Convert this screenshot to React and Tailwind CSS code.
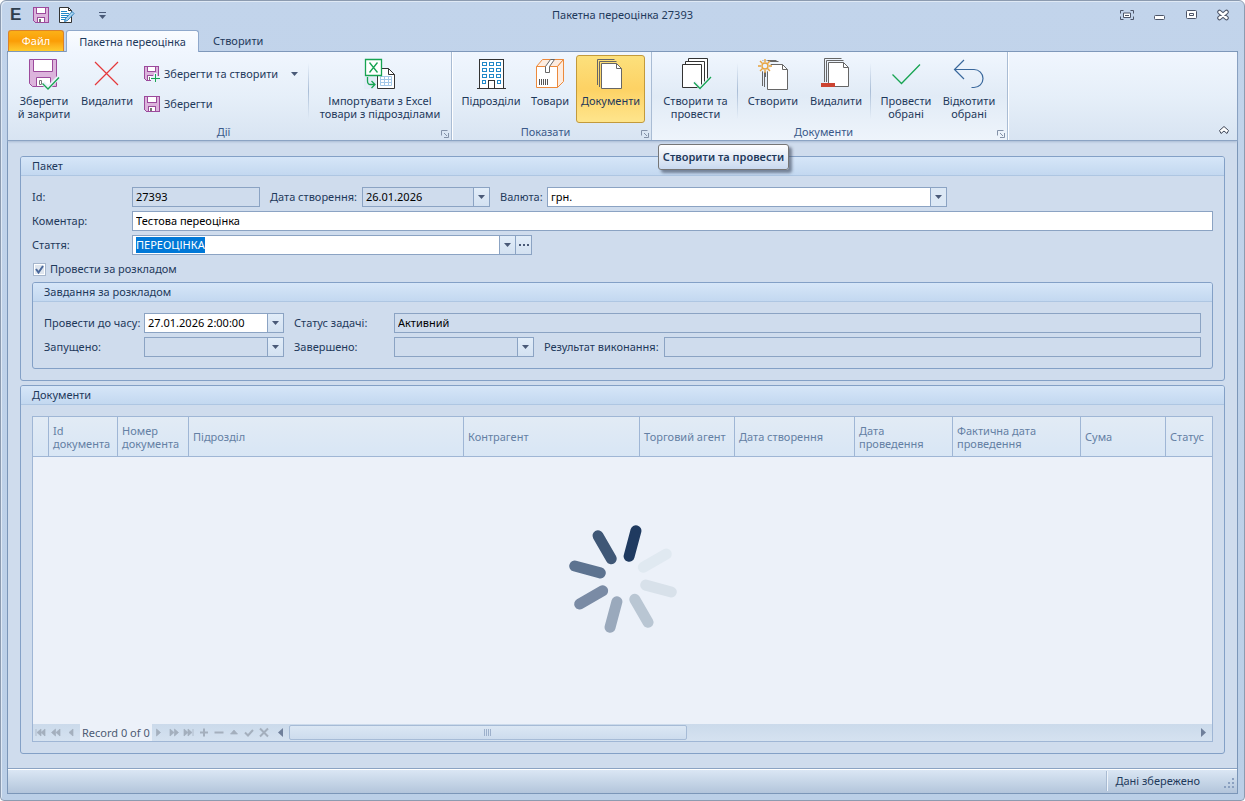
import React, { useEffect, useRef, useState } from 'react';

const SaveIcon = ({ size = 16 }) => (
    <svg width={size} height={size} viewBox="0 0 16 16" shapeRendering="crispEdges">
        <path d="M0.5 0.5h15v15h-13l-2-2z" fill="#dcb4dc" stroke="#9c4a9c" />
        <path d="M3.5 0.5h9v6h-9z" fill="#fff" stroke="#9c4a9c" />
        <path d="M4.5 10.5h7v5h-7z" fill="#fff" stroke="#9c4a9c" />
        <path d="M6 12h2v3h-2z" fill="#777" />
    </svg>
);

const SaveNewIcon = () => (
    <svg width="16" height="16" viewBox="0 0 16 16" overflow="visible" shapeRendering="crispEdges">
        <path d="M0.5 0.5h14v14h-12l-2-2z" fill="#dcb4dc" stroke="#9c4a9c" />
        <path d="M3.5 0.5h8v5h-8z" fill="#fff" stroke="#9c4a9c" />
        <path d="M3.5 9.5h5v5h-5z" fill="#fff" stroke="#9c4a9c" />
        <path d="M5 11h1v3h-1z" fill="#777" />
        <path d="M7 10h3v-3h3v3h4v6h-10z" fill="#eaf1fa" />
        <path d="M11.5 8v8M7 12.5h9" stroke="#17a452" />
    </svg>
);

const SaveCloseIcon = () => (
    <svg width="32" height="32" viewBox="0 0 32 32">
        <path d="M1.5 1.5h27v27h-24l-3-3z" fill="#dcb4dc" stroke="#9c4a9c" />
        <path d="M5.5 1.5h19v12h-19z" fill="#fff" stroke="#9c4a9c" />
        <path d="M8.5 19.5h14v9h-14z" fill="#fff" stroke="#9c4a9c" />
        <path d="M11.5 22.5h2v4h-2z" fill="#fff" stroke="#777" />
        <path d="M15 25l5 5 11-11" fill="none" stroke="#eaf1fa" strokeWidth="4" />
        <path d="M14.5 25.5l5.5 5.5 11-11.5" fill="none" stroke="#17a452" strokeWidth="1.3" />
    </svg>
);

const DeleteIcon = () => (
    <svg width="32" height="32" viewBox="0 0 32 32">
        <path d="M4 4l23 23M27 4L4 27" stroke="#e5383b" strokeWidth="1.2" />
    </svg>
);

const ExcelIcon = () => (
    <svg width="32" height="32" viewBox="0 0 32 32">
        <path d="M13.5 10.5h11l6 6v14h-17z" fill="#fff" stroke="#333" />
        <path d="M24.500 10.500v6h6" fill="none" stroke="#333" />
        <path d="M16.500 18.500h11v9h-11zM20.500 18v10M24.500 18v10M16 21.500h12M16 24.500h12" fill="none" stroke="#a3c8e8" />
        <path d="M1.500 1.500h16v16h-16z" fill="#fff" stroke="#17a452" strokeWidth="1.3" />
        <path d="M5.500 4.500l8 10M13.500 4.500l-8 10" stroke="#17a452" strokeWidth="1.3" />
        <path d="M0 19h12v12h-12z" fill="#e3ecf7" />
        <path d="M3.500 19v4q0 3.500 3 3.500h4M7.500 23l3.500 3.500-3.500 3.500" fill="none" stroke="#17a452" strokeWidth="1.3" />
    </svg>
);

const BuildingIcon = () => (
    <svg width="32" height="32" viewBox="0 0 32 32" shapeRendering="crispEdges">
        <path d="M4.5 30v-28.5h24v28.5" fill="#fff" stroke="#333" />
        <path d="M2 30.5h29M13.5 30v-7.500h6v7.500" fill="none" stroke="#333" />
        <path
            d="M7.500 4.500h4v3h-4zM14.500 4.500h4v3h-4zM21.500 4.500h4v3h-4zM7.500 10.500h4v3h-4zM14.500 10.500h4v3h-4zM21.500 10.500h4v3h-4zM7.500 16.500h4v3h-4zM14.500 16.500h4v3h-4zM21.500 16.500h4v3h-4zM7.500 22.500h3v3h-3zM22.500 22.500h3v3h-3z"
            fill="#fff"
            stroke="#2088c8"
        />
    </svg>
);

const BoxIcon = () => (
    <svg width="32" height="32" viewBox="0 0 32 32">
        <path d="M2.500 8.500l6-7h21l-6 7z" fill="#fdece0" stroke="#ec8a3c" />
        <path d="M23.500 8.500l6-7v22l-6 6z" fill="#fdece0" stroke="#ec8a3c" />
        <path d="M2.500 8.500h21v21h-21z" fill="#fff" stroke="#ec8a3c" />
        <path d="M11.500 8.500l5-7h4l-5 7v6h-4z" fill="#fff" stroke="#666" />
        <path d="M5.500 21v6M7.500 21v6M9.500 21v6M11.500 21v6M13.500 21v6" stroke="#555" />
    </svg>
);

const SheetStack = () => (
    <g fill="none" stroke="#666">
        <path d="M5.500 18v-15.500h14M8.500 19v-15.500h13" />
        <path d="M5.500 14v14M7.500 14v15" />
        <path d="M10.500 6.500h15l5 5v20h-20z" fill="#fff" />
        <path d="M25.500 6.500v5h5" />
    </g>
);

const DocumentsIcon = () => (
    <svg width="32" height="32" viewBox="0 0 32 32">
        <g fill="none" stroke="#666">
            <path d="M2.500 27v-25.500h17M4.500 29v-25.500h17" />
            <path d="M6.500 5.500h15l5 5v20h-20z" fill="#fff" />
            <path d="M21.500 5.500v5h5" />
        </g>
    </svg>
);

const CreatePostIcon = () => (
    <svg width="32" height="32" viewBox="0 0 32 32">
        <g fill="#fff" stroke="#333">
            <path d="M8.500 0.500h19v23h-19z" />
            <path d="M5.500 3.500h19v23h-19z" />
            <path d="M2.500 6.500h19v23h-19z" />
        </g>
        <path d="M14 24l6 6 12-12" fill="none" stroke="#eaf1fa" strokeWidth="3" />
        <path d="M14 24.500l6 6 11-11.500" fill="none" stroke="#17a452" strokeWidth="1.3" />
    </svg>
);

const NewDocsIcon = () => (
    <svg width="32" height="32" viewBox="0 0 32 32" overflow="visible">
        <SheetStack />
        <circle cx="8" cy="8" r="6" fill="#eaf1fa" />
        <g stroke="#e8a33d" strokeWidth="1.4" fill="none">
            <circle cx="8" cy="8" r="3" />
            <path d="M8 1v3M8 12v3M1 8h3M12 8h3M3 3l2.500 2.500M13 3l-2.500 2.500M3 13l2.500-2.500M13 13l-2.500-2.500" />
        </g>
    </svg>
);

const RemoveDocsIcon = () => (
    <svg width="32" height="32" viewBox="0 0 32 32">
        <g fill="none" stroke="#666">
            <path d="M4.500 24v-23.500h17M6.500 24v-21.500h17" />
            <path d="M8.500 4.500h15l5 5v19h-20z" fill="#fff" />
            <path d="M23.500 4.500v5h5" />
        </g>
        <path d="M1 25h14v4h-14z" fill="#cc4432" />
    </svg>
);

const CheckIcon = () => (
    <svg width="32" height="32" viewBox="0 0 32 32">
        <path d="M2.500 16.500l9 9 18.500-19" fill="none" stroke="#17a452" strokeWidth="1.3" />
    </svg>
);

const UndoIcon = () => (
    <svg width="32" height="32" viewBox="0 0 32 32">
        <path d="M11 2l-9.500 9.500 9.500 9.500M1.500 11.500h19.500a9 9 0 0 1 0 18h-2.500" fill="none" stroke="#3a689c" strokeWidth="1.2" />
    </svg>
);

const EditDocIcon = () => (
    <svg width="16" height="16" viewBox="0 0 16 16">
        <path d="M0.500 0.500h9l3 3v12h-12z" fill="#fff" stroke="#333" />
        <path d="M9.500 0.500v3h3" fill="none" stroke="#333" />
        <path d="M2 4.500h6M2 6.500h8M2 8.500h7M2 10.500h5M2 12.500h4" stroke="#2088c8" />
        <path d="M5.500 14.500l1-3 6.500-7 2 2-6.500 7z" fill="#a9d4f0" stroke="#2a7fbd" />
    </svg>
);

const Arrow = () => (
    <svg width="7" height="4" viewBox="0 0 7 4">
        <path d="M0 0h7l-3.500 4z" fill="#4a5a78" />
    </svg>
);

const windowButtons = [
    {
        name: 'Full screen',
        icon: (
            <>
                <path d="M0.500 4.500v-3h3M10.500 1.500h3v3M13.500 7.500v3h-3M3.500 10.500h-3v-3" fill="none" stroke="#4c5568" />
                <path d="M3.500 4h7v4.500h-7z" fill="#fff" stroke="#4c5568" />
                <path d="M5 6.500h4" stroke="#4c5568" />
            </>
        )
    },
    { name: 'Minimize', icon: <rect x="2.500" y="6.500" width="10" height="4" rx="1" fill="#fff" stroke="#4c5568" /> },
    {
        name: 'Restore',
        icon: (
            <>
                <rect x="2.500" y="1.500" width="10" height="8" rx="1" fill="#fff" stroke="#4c5568" />
                <path d="M5.500 4.500h4v2h-4z" fill="none" stroke="#4c5568" />
            </>
        )
    },
    {
        name: 'Close',
        icon: (
            <>
                <path d="M3.500 3l7 6M10.500 3l-7 6" stroke="#4c5568" strokeWidth="4.500" strokeLinecap="round" />
                <path d="M3.500 3l7 6M10.500 3l-7 6" stroke="#fff" strokeWidth="2.500" strokeLinecap="round" />
            </>
        )
    }
];

const BigButton = ({ icon, children, width, active }) => (
    <button
        type="button"
        className={`${width} h-17 pt-0.5 flex flex-col items-center gap-1 rounded-[3px] border leading-[13px] ${
            active
                ? 'border-[#c29a3c] bg-linear-to-b from-[#fce07c] via-[#fdd264] to-[#fee58c]'
                : 'border-transparent hover:bg-[#fdf0c0]'
        }`}
    >
        {icon}
        <span className="whitespace-nowrap">{children}</span>
    </button>
);

const Separator = () => (
    <div className="w-px h-14 mt-2 bg-linear-to-b from-transparent via-[#a9bdd6] to-transparent" />
);

const RibbonGroup = ({ title, highlight, children }) => (
    <section
        className={`flex flex-col border-r border-[#a9bcd4] shadow-[1px_0_0_#fff] px-1.5 ${
            highlight ? 'bg-linear-to-b from-[#f0f6fe] via-[#e1ebf6] to-[#eef4fb]' : ''
        }`}
    >
        <div className="flex-1 flex pt-[3px]">{children}</div>
        <div className="h-[17px] flex items-center">
            <h2 className="flex-1 pr-2 text-center leading-4 text-[#3b5a8a]">{title}</h2>
            <button type="button" aria-label={title} className="-mr-1 self-end pb-0.5">
                <svg width="8" height="8" viewBox="0 0 8 8">
                    <path d="M0.500 5.500v-5h6" fill="none" stroke="#8492a8" />
                    <path d="M3 3l3 3M7.500 3v4.500h-4.500" fill="none" stroke="#8492a8" />
                </svg>
            </button>
        </div>
    </section>
);

const Panel = ({ title, className = '', children }) => (
    <section className={`flex flex-col rounded-[3px] border border-[#83a0c6] ${className}`}>
        <h2 className="h-[19px] pl-[11px] leading-[18px] rounded-t-[2px] border-b border-[#aec6e2] bg-linear-to-b from-[#d6e6f8] to-[#c3d8f0]">
            {title}
        </h2>
        {children}
    </section>
);

const fieldBox = 'h-5 border border-[#8ba3c3] text-black';

const TextField = ({ id, value, disabled, className = '' }) => (
    <input
        id={id}
        type="text"
        defaultValue={value}
        readOnly={disabled}
        className={`${fieldBox} px-[3px] pb-0.5 min-w-0 outline-none ${disabled ? 'bg-[#cfdced]' : 'bg-white'} ${className}`}
    />
);

const DropButton = ({ label, children }) => (
    <button
        type="button"
        aria-label={label}
        className="w-4 shrink-0 flex items-center justify-center border-l border-[#8ba3c3] bg-linear-to-b from-[#e2edf9] to-[#d3e1f1]"
    >
        {children}
    </button>
);

const ComboField = ({ id, value, disabled, inputRef, extra, className = '' }) => (
    <div className={`${fieldBox} flex ${disabled ? 'bg-[#cfdced]' : 'bg-white'} ${className}`}>
        <input
            id={id}
            ref={inputRef}
            type="text"
            defaultValue={value}
            readOnly={disabled}
            className="flex-1 min-w-0 px-[3px] bg-transparent outline-none selection:bg-[#0078d7] selection:text-white"
        />
        <DropButton label="Відкрити список">
            <Arrow />
        </DropButton>
        {extra}
    </div>
);

const columns = [
    { title: '', width: 'w-4' },
    { title: 'Id документа', width: 'w-[69px]' },
    { title: 'Номер документа', width: 'w-[71px]' },
    { title: 'Підрозділ', width: '' },
    { title: 'Контрагент', width: 'w-[176px]' },
    { title: 'Торговий агент', width: 'w-[95px]' },
    { title: 'Дата створення', width: 'w-[120px]' },
    { title: 'Дата проведення', width: 'w-[98px]' },
    { title: 'Фактична дата проведення', width: 'w-[128px]' },
    { title: 'Сума', width: 'w-[85px]' },
    { title: 'Статус', width: 'w-[46px]' }
];

const navBefore = [
    { name: 'First', d: 'M1 2v7M6 2v7l-4-3.500zM10 2v7l-4-3.500z' },
    { name: 'Previous page', d: 'M5.500 2v7l-4-3.500zM10 2v7l-4-3.500z' },
    { name: 'Previous', d: 'M8 2v7l-4-3.500z' }
];

const navAfter = [
    { name: 'Next', d: 'M3.500 2v7l4-3.500z' },
    { name: 'Next page', d: 'M2 2v7l4-3.500zM6.500 2v7l4-3.500z' },
    { name: 'Last', d: 'M1 2v7l4-3.500zM5 2v7l4-3.500zM10 2v7' },
    { name: 'Append', d: 'M2 5.500h8M6 1.500v8', line: true },
    { name: 'Delete', d: 'M1.500 5.500h9', line: true },
    { name: 'Edit', d: 'M2.500 7h7l-3.500-4z' },
    { name: 'End edit', d: 'M2 5.500l3 3 5-5.500', line: true },
    { name: 'Cancel edit', d: 'M2 1.500l8 8M10 1.500l-8 8', line: true }
];

const NavButton = ({ item }) => (
    <button type="button" aria-label={item.name} className="w-[15px] flex items-center justify-center">
        <svg width="12" height="12" viewBox="0 0 12 12">
            <path
                d={item.d}
                fill={item.line ? 'none' : '#a4afbd'}
                stroke="#a4afbd"
                strokeWidth={item.line ? 2 : 0.7}
            />
        </svg>
    </button>
);

const spinnerColors = ['#1f3a60', '#e0e9f1', '#d8e1ea', '#b9c6d3', '#9aa9bc', '#7a8ba5', '#5d7390', '#3f5776'];

const Spinner = () => (
    <svg width="110" height="110" viewBox="-55 -55 110 110">
        {spinnerColors.map((color, i) => (
            <path
                key={color}
                d="M0 -23.500V-50"
                stroke={color}
                strokeWidth="11"
                strokeLinecap="round"
                transform={`rotate(${15 + i * 45})`}
            />
        ))}
    </svg>
);

const App = () => {
    const [scheduled, setScheduled] = useState(true);
    const articleRef = useRef(null);

    useEffect(() => {
        articleRef.current.focus();
        articleRef.current.select();
    }, []);

    return (
        <div className="min-h-screen flex flex-col px-[6px] pb-1.5 rounded-t-md rounded-b-sm border border-[#8c9bb0] bg-linear-to-b from-[#c2d4eb] to-[#bbcfe7] shadow-[inset_1px_1px_0_#dfe9f5] font-['Noto_Sans','Open_Sans',sans-serif] text-[11px] text-[#1e395b]">
            <header className="h-7 grid grid-cols-3 items-center">
                <div className="flex items-center pl-[3px]">
                    <span className="w-3 mr-[11px] font-['Liberation_Sans',sans-serif] text-[17px] leading-4 font-bold text-[#2f3f4f]">E</span>
                    <button type="button" aria-label="Зберегти" className="mr-[10px]"><SaveIcon /></button>
                    <button type="button" aria-label="Редагувати" className="mr-6"><EditDocIcon /></button>
                    <button type="button" aria-label="Налаштувати панель">
                        <svg width="7" height="7" viewBox="0 0 7 7">
                            <path d="M0 0.500h7" stroke="#4a5a78" />
                            <path d="M0 3h7l-3.500 4z" fill="#4a5a78" />
                        </svg>
                    </button>
                </div>
                <h1 className="text-center whitespace-nowrap">Пакетна переоцінка 27393</h1>
                <div className="flex justify-end gap-[18px] pr-2">
                    {windowButtons.map(button => (
                        <button key={button.name} type="button" aria-label={button.name}>
                            <svg width="14" height="13" viewBox="0 0 14 13">{button.icon}</svg>
                        </button>
                    ))}
                </div>
            </header>

            <nav className="flex items-end h-[22px] pl-px">
                <button type="button" className="w-14 h-[21px] pt-px rounded-t-[3px] border border-b-0 border-[#d9822b] bg-linear-to-b from-[#fbb117] via-[#fb9d05] to-[#fecb2c] text-white">
                    Файл
                </button>
                <button type="button" className="w-[133px] h-[22px] pt-px ml-0.5 -mb-px relative z-10 rounded-t-[3px] border border-b-0 border-[#8fa8cb] bg-linear-to-b from-[#fafcff] to-[#f0f6fe]">
                    Пакетна переоцінка
                </button>
                <button type="button" className="px-3.5 h-[21px] pt-0.5">Створити</button>
            </nav>

            <main className="flex-1 flex flex-col border border-[#7b96b8] bg-[#cfdced]">
                <div className="h-[89px] flex border-b border-[#8ba3c3] bg-linear-to-b from-[#f0f6fe] via-[#e6eff9] to-[#d8e4f2] shadow-[0_1px_2px_#a9bbd4]">
                    <RibbonGroup title="Дії">
                        <BigButton width="w-[60px]" icon={<SaveCloseIcon />}>Зберегти<br />й закрити</BigButton>
                        <BigButton width="w-[66px]" icon={<DeleteIcon />}>Видалити</BigButton>
                        <div className="w-[168px] pl-1 pt-[11px] flex flex-col gap-3.5">
                            <button type="button" className="h-4 flex items-center gap-1">
                                <SaveNewIcon />
                                <span className="flex-1 text-left whitespace-nowrap">Зберегти та створити</span>
                                <span className="pr-2.5"><Arrow /></span>
                            </button>
                            <button type="button" className="h-4 flex items-center gap-1">
                                <SaveIcon />
                                Зберегти
                            </button>
                        </div>
                        <Separator />
                        <BigButton width="w-[142px] -mr-1.5" icon={<ExcelIcon />}>
                            Імпортувати з Excel<br />товари з підрозділами
                        </BigButton>
                    </RibbonGroup>

                    <RibbonGroup title="Показати">
                        <BigButton width="w-[66px]" icon={<BuildingIcon />}>Підрозділи</BigButton>
                        <BigButton width="w-[52px]" icon={<BoxIcon />}>Товари</BigButton>
                        <BigButton width="w-[69px]" icon={<DocumentsIcon />} active>Документи</BigButton>
                    </RibbonGroup>

                    <RibbonGroup title="Документи" highlight>
                        <div className="relative mr-1">
                            <BigButton width="w-[75px]" icon={<CreatePostIcon />}>Створити та<br />провести</BigButton>
                            <div role="tooltip" className="absolute left-0 top-[89px] z-20 w-[131px] h-[26px] flex items-center justify-center rounded-[3px] border border-[#767676] bg-linear-to-b from-white to-[#c9d9ef] font-semibold whitespace-nowrap shadow-[3px_3px_3px_rgba(60,70,90,0.6)]">
                                Створити та провести
                            </div>
                        </div>
                        <Separator />
                        <BigButton width="w-[70px]" icon={<NewDocsIcon />}>Створити</BigButton>
                        <BigButton width="w-[56px] mr-1.5" icon={<RemoveDocsIcon />}>Видалити</BigButton>
                        <Separator />
                        <BigButton width="w-[70px]" icon={<CheckIcon />}>Провести<br />обрані</BigButton>
                        <BigButton width="w-[56px] mr-1" icon={<UndoIcon />}>Відкотити<br />обрані</BigButton>
                    </RibbonGroup>

                    <button type="button" aria-label="Згорнути стрічку" className="ml-auto self-end mr-2 mb-1.5">
                        <svg width="10" height="8" viewBox="0 0 10 8">
                            <path d="M0.500 4.500l4.500-4 4.500 4-1.500 3-3-2.500-3 2.500z" fill="#fff" stroke="#3f4758" strokeLinejoin="round" />
                        </svg>
                    </button>
                </div>

                <div className="flex-1 flex flex-col gap-1 px-3 pt-[15px] pb-3.5">
                    <Panel title="Пакет">
                        <div className="px-[11px] py-[11px] flex flex-col gap-1">
                            <div className="flex items-center">
                                <label htmlFor="packetId" className="w-[100px]">Id:</label>
                                <TextField id="packetId" value="27393" disabled className="w-32" />
                                <label htmlFor="createdAt" className="w-[102px] pl-2.5 whitespace-nowrap">Дата створення:</label>
                                <ComboField id="createdAt" value="26.01.2026" disabled className="w-32" />
                                <label htmlFor="currency" className="w-[57px] pl-2.5">Валюта:</label>
                                <div className={`${fieldBox} w-[400px] grid bg-white`}>
                                    <select id="currency" className="col-start-1 row-start-1 appearance-none px-[3px] outline-none">
                                        <option>грн.</option>
                                    </select>
                                    <span className="col-start-1 row-start-1 justify-self-end w-4 flex items-center justify-center border-l border-[#8ba3c3] bg-[#dce8f5] pointer-events-none">
                                        <Arrow />
                                    </span>
                                </div>
                            </div>
                            <div className="flex items-center">
                                <label htmlFor="comment" className="w-[100px]">Коментар:</label>
                                <TextField id="comment" value="Тестова переоцінка" className="flex-1" />
                            </div>
                            <div className="flex items-center">
                                <label htmlFor="article" className="w-[100px]">Стаття:</label>
                                <ComboField
                                    id="article"
                                    value="ПЕРЕОЦІНКА"
                                    inputRef={articleRef}
                                    className="w-[400px]"
                                    extra={
                                        <DropButton label="Вибрати статтю">
                                            <svg width="10" height="2" viewBox="0 0 10 2">
                                                <path d="M0 0h2v2h-2zM4 0h2v2h-2zM8 0h2v2h-2z" fill="#4a5a78" />
                                            </svg>
                                        </DropButton>
                                    }
                                />
                            </div>
                            <label className="h-5 flex items-center gap-1">
                                <span className="ml-px grid place-items-center">
                                    <input
                                        type="checkbox"
                                        checked={scheduled}
                                        onChange={() => setScheduled(!scheduled)}
                                        className="peer col-start-1 row-start-1 appearance-none size-[13px] border border-[#a6b6cc] bg-[#dfe6ef] shadow-[inset_0_0_0_1px_#fff]"
                                    />
                                    <svg className="col-start-1 row-start-1 hidden peer-checked:block pointer-events-none" width="9" height="9" viewBox="0 0 9 9">
                                        <path d="M1 4l2.500 3.500L8 1" fill="none" stroke="#4a689a" strokeWidth="2" />
                                    </svg>
                                </span>
                                Провести за розкладом
                            </label>

                            <Panel title="Завдання за розкладом" className="-mt-px">
                                <div className="px-[11px] py-[11px] flex flex-col gap-1">
                                    <div className="flex items-center">
                                        <label htmlFor="runAt" className="w-[100px] whitespace-nowrap">Провести до часу:</label>
                                        <ComboField id="runAt" value="27.01.2026 2:00:00" className="w-[140px]" />
                                        <label htmlFor="taskStatus" className="w-[110px] pl-2.5">Статус задачі:</label>
                                        <TextField id="taskStatus" value="Активний" disabled className="flex-1" />
                                    </div>
                                    <div className="flex items-center">
                                        <label htmlFor="startedAt" className="w-[100px]">Запущено:</label>
                                        <ComboField id="startedAt" value="" disabled className="w-[140px]" />
                                        <label htmlFor="finishedAt" className="w-[110px] pl-2.5">Завершено:</label>
                                        <ComboField id="finishedAt" value="" disabled className="w-[140px]" />
                                        <label htmlFor="result" className="w-[130px] pl-2.5 whitespace-nowrap">Результат виконання:</label>
                                        <TextField id="result" value="" disabled className="flex-1" />
                                    </div>
                                </div>
                            </Panel>
                        </div>
                    </Panel>

                    <Panel title="Документи" className="flex-1">
                        <div className="flex-1 flex p-[11px]">
                            <div className="relative flex-1 flex flex-col border border-[#9fb6d5] bg-[#ecf1f9]">
                                <table className="w-full table-fixed border-separate border-spacing-0">
                                    <thead>
                                        <tr className="bg-linear-to-b from-[#e2ebf5] to-[#d8e6f5]">
                                            {columns.map(column => (
                                                <th
                                                    key={column.title}
                                                    className={`${column.width} h-10 px-1 py-0 text-left align-middle font-normal leading-[13px] text-[#6480a4] border-b border-r border-[#9fb6d5] last:border-r-0`}
                                                >
                                                    {column.title}
                                                </th>
                                            ))}
                                        </tr>
                                    </thead>
                                    <tbody />
                                </table>
                                <div className="flex-1" />
                                <div className="h-[17px] flex bg-linear-to-b from-[#cbdaeb] to-[#d5e2f0]">
                                    {navBefore.map(item => <NavButton key={item.name} item={item} />)}
                                    <span className="ml-0.5 px-0.5 bg-[#ecf1f9] leading-[17px] whitespace-nowrap text-[#4c5b74]">Record 0 of 0</span>
                                    {navAfter.map(item => <NavButton key={item.name} item={item} />)}
                                    <button type="button" aria-label="Прокрутити ліворуч" className="w-[17px] flex items-center justify-center">
                                        <svg width="5" height="9" viewBox="0 0 5 9"><path d="M5 0v9l-5-4.500z" fill="#6f7f9a" /></svg>
                                    </button>
                                    <div className="flex-1 flex items-center">
                                        <div className="w-[44%] h-[15px] flex items-center justify-center rounded-[2px] border border-[#a6bbd6] bg-linear-to-b from-[#dbe7f4] to-[#cddced]">
                                            <svg width="8" height="7" viewBox="0 0 8 7">
                                                <path d="M0.500 0v7M2.500 0v7M4.500 0v7M6.500 0v7" stroke="#9db0cb" />
                                            </svg>
                                        </div>
                                    </div>
                                    <button type="button" aria-label="Прокрутити праворуч" className="w-[17px] flex items-center justify-center">
                                        <svg width="5" height="9" viewBox="0 0 5 9"><path d="M0 0v9l5-4.500z" fill="#6f7f9a" /></svg>
                                    </button>
                                </div>
                                <div className="absolute inset-0 flex items-center justify-center pointer-events-none">
                                    <Spinner />
                                </div>
                            </div>
                        </div>
                    </Panel>
                </div>

                <footer className="h-[25px] flex items-center justify-end border-t border-[#8ba3c3] shadow-[inset_0_1px_0_#fff] bg-linear-to-b from-[#dce8f5] to-[#b3c5db]">
                    <div className="w-px h-5 bg-[#a9bbd2] shadow-[1px_0_0_#eef4fb]" />
                    <span className="pl-2 pr-6 whitespace-nowrap">Дані збережено</span>
                    <svg className="self-end mb-1 mr-0.5" width="11" height="11" viewBox="0 0 11 11">
                        <path d="M8 0h2v2h-2zM4 4h2v2h-2zM8 4h2v2h-2zM0 8h2v2h-2zM4 8h2v2h-2zM8 8h2v2h-2z" fill="#8aa0c0" />
                    </svg>
                </footer>
            </main>
        </div>
    );
};

export default App;
